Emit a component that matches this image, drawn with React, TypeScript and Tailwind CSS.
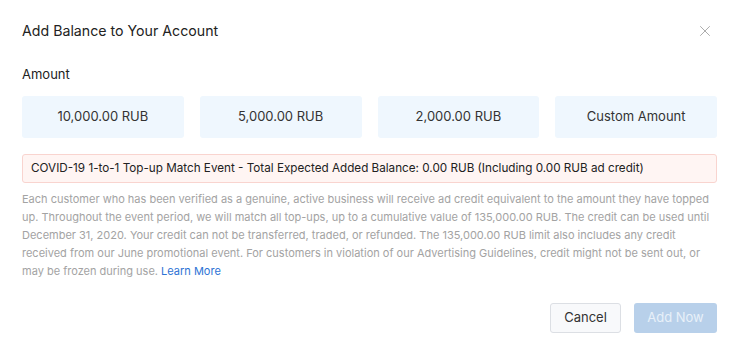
import { X } from "lucide-react";

const AMOUNTS = ["10,000.00 RUB", "5,000.00 RUB", "2,000.00 RUB", "Custom Amount"];

export default function App() {
  return (
    <div className="w-[739px] h-[353px] bg-white font-['Inter',sans-serif] text-[#333] px-[22px] pt-[20px]">
      {/* Header */}
      <div className="flex items-center justify-between h-[22px]">
        <h2 className="text-[14.2px] leading-[22px] text-[#222]">Add Balance to Your Account</h2>
        <button className="text-[#9a9a9a] mr-[3px]" aria-label="Close">
          <X size={18} strokeWidth={1.1} />
        </button>
      </div>

      {/* Amount */}
      <div className="mt-[23px] text-[13px] leading-[18px] text-[#222]">Amount</div>
      <div className="mt-[13px] grid grid-cols-4 gap-[16px]">
        {AMOUNTS.map((a) => (
          <button
            key={a}
            className="h-[42px] rounded-[3px] bg-[#eff7fe] text-[13px] text-[#333]"
          >
            {a}
          </button>
        ))}
      </div>

      {/* Event banner */}
      <div className="mt-[16px] h-[29px] flex items-center px-[8px] rounded-[3px] border border-[#f9d4cf] bg-[#fff5f3] text-[11.7px] text-[#222]">
        COVID-19 1-to-1 Top-up Match Event - Total Expected Added Balance: 0.00 RUB (Including 0.00 RUB ad credit)
      </div>

      <p className="mt-[7px] text-[11px] leading-[18px] text-[#a3a3a3]">
        Each customer who has been verified as a genuine, active business will receive ad credit equivalent to the amount they have topped up. Throughout the event period, we will match all top-ups, up to a cumulative value of 135,000.00 RUB. The credit can be used until December 31, 2020. Your credit can not be transferred, traded, or refunded. The 135,000.00 RUB limit also includes any credit received from our June promotional event. For customers in violation of our Advertising Guidelines, credit might not be sent out, or may be frozen during use.{" "}
        <a href="#" className="text-[#2d73d5]">Learn More</a>
      </p>

      {/* Footer */}
      <div className="mt-[23px] flex justify-end gap-[13px]">
        <button className="h-[30px] w-[71px] rounded-[3px] border border-[#dcdfe4] bg-[#f8f9fb] text-[13px] text-[#333]">
          Cancel
        </button>
        <button className="h-[30px] w-[83px] rounded-[3px] bg-[#b8d0ea] text-[13px] text-[#e8f0f9]">
          Add Now
        </button>
      </div>
    </div>
  );
}
